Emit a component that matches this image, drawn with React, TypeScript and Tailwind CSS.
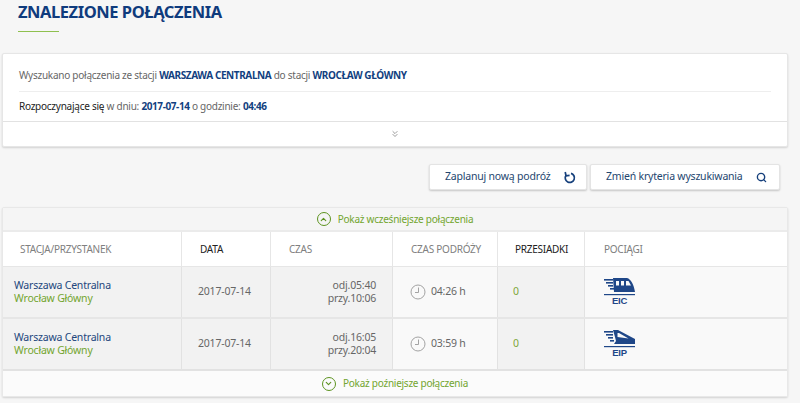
import React from 'react';
import { ChevronsDown, ChevronUp, ChevronDown, Search } from 'lucide-react';

const TrainIcon = ({ label, fast }: { label: string; fast?: boolean }) => (
  <svg width="34" height="30" viewBox="0 0 34 30" className="block">
    <g fill="#1f4788">
      <rect x="1" y="2" width="9" height="1.6" />
      <rect x="3" y="5" width="7" height="1.6" />
      <rect x="5" y="8" width="5" height="1.6" />
      <rect x="7" y="11" width="4" height="1.6" />
      <rect x="1" y="17" width="31" height="1.2" />
      {fast ? (
        <path d="M10 1 L15 1 L32 10 L32 15 L11 15 L13 12 L12 8 Z M14.5 4 L14.5 8 L25.5 9.5 L16 4 Z" fillRule="evenodd" />
      ) : (
        <path d="M10 1 L24 1 C28 2 31 8 32 15 L11 15 Z M13 4 V8.5 H16 V4 Z M18 4 V8.5 H21 V4 Z M23 4 V8.5 H28 L25.5 4 Z" fillRule="evenodd" />
      )}
    </g>
    <text x="16.5" y="27" textAnchor="middle" fontSize="9.5" fontWeight="700" fill="#1f4788" fontFamily="Liberation Sans, sans-serif">{label}</text>
  </svg>
);

const ClockIcon = () => (
  <svg width="16" height="16" viewBox="0 0 16 16" fill="none" stroke="#a3a3a3" strokeWidth="1" className="shrink-0">
    <circle cx="8" cy="8" r="7" />
    <path d="M8.5 3.5 V8.5 H5" />
  </svg>
);

const RefreshIcon = () => (
  <svg width="13" height="13" viewBox="0 0 13 13" fill="none" stroke="#16407c" strokeWidth="1.7" className="ml-[13px] shrink-0">
    <path d="M8 2.4 A4.6 4.6 0 1 1 3 4.3" />
    <path d="M2.2 1 L3 4.8 L6.6 4.4" />
  </svg>
);

const rows = [
  { dep: '05:40', arr: '10:06', dur: '04:26 h', train: 'EIC', fast: false },
  { dep: '16:05', arr: '20:04', dur: '03:59 h', train: 'EIP', fast: true },
];

const cols = 'grid grid-cols-[178px_89px_122px_105px_87px_1fr]';

export default function App() {
  return (
    <div className="w-[800px] h-[403px] overflow-hidden bg-[#f6f6f6] pl-[2px] pr-3 text-[10px] tracking-[-0.25px] text-[#666] font-['Noto_Sans','Open_Sans',sans-serif]">
      <div className="pl-4 pt-[2px] h-[53px]">
        <h1 className="text-[16.5px] tracking-[-0.45px] leading-[20px] font-bold text-[#0f3b7d]">ZNALEZIONE POŁĄCZENIA</h1>
        <div className="w-[41px] h-px bg-[#8fc04f] mt-[9px]" />
      </div>

      <div className="bg-white rounded-[2px] border border-[#e6e6e6] shadow-[0_1px_2px_rgba(0,0,0,0.15)] h-[94px]">
        <div className="mx-4 h-[38px] pt-[13px] leading-[16px] border-b border-[#eeeeee]">
          Wyszukano połączenia ze stacji <b className="text-[#123f7f] tracking-[-0.4px]">WARSZAWA CENTRALNA</b> do stacji <b className="text-[#123f7f] tracking-[-0.4px]">WROCŁAW GŁÓWNY</b>
        </div>
        <div className="mx-4 h-[29px] pt-[6px] leading-[16px]">
          <span className="text-[#222]">Rozpoczynające się</span> w dniu: <b className="text-[#123f7f] tracking-[-0.4px]">2017-07-14</b> o godzinie: <b className="text-[#123f7f] tracking-[-0.4px]">04:46</b>
        </div>
        <div className="h-[25px] border-t border-[#e2e2e2] flex items-center justify-center">
          <ChevronsDown size={10} className="text-[#888]" />
        </div>
      </div>

      <div className="flex justify-end gap-[3px] pr-2 mt-[17px] h-[26px] text-[10.5px] tracking-[-0.2px]">
        <button className="w-[158px] bg-white rounded-[2px] border border-[#e4e4e4] shadow-[0_1px_2px_rgba(0,0,0,0.2)] flex items-center pl-[15px] text-[#24466f]">
          <span>Zaplanuj nową podróż</span>
          <RefreshIcon />
        </button>
        <button className="w-[190px] bg-white rounded-[2px] border border-[#e4e4e4] shadow-[0_1px_2px_rgba(0,0,0,0.2)] flex items-center pl-[15px] text-[#24466f]">
          <span>Zmień kryteria wyszukiwania</span>
          <Search size={11} strokeWidth={3} className="ml-[13px] text-[#16407c]" />
        </button>
      </div>

      <div className="mt-[17px] rounded-[2px] border border-[#e8e8e8] shadow-[0_1px_2px_rgba(0,0,0,0.15)]">
        <div className="h-[24px] bg-[#f5f5f5] flex items-center justify-center gap-[7px] text-[#72a52f] border-b-2 border-[#ebebeb]">
          <span className="w-[14px] h-[14px] rounded-full border-[1.5px] border-[#5d9320] flex items-center justify-center">
            <ChevronUp size={9} strokeWidth={3} className="text-[#5d9320]" />
          </span>
          Pokaż wcześniejsze połączenia
        </div>
        <div className={`${cols} h-[35px] bg-white items-stretch text-[#808080] border-b border-[#e6e6e6]`}>
          <div className="flex items-center pl-[17px]">STACJA/PRZYSTANEK</div>
          <div className="flex items-center pl-[18px] border-l border-[#e6e6e6] text-[#222]">DATA</div>
          <div className="flex items-center pl-[18px] border-l border-[#e6e6e6]">CZAS</div>
          <div className="flex items-center pl-[18px] border-l border-[#e6e6e6]">CZAS PODRÓŻY</div>
          <div className="flex items-center pl-[17px] border-l border-[#e6e6e6] text-[#222]">PRZESIADKI</div>
          <div className="flex items-center pl-[19px] border-l border-[#e6e6e6]">POCIĄGI</div>
        </div>
        {rows.map((r, i) => (
          <div key={r.train} className={`${cols} h-[52px] text-[10.5px] tracking-[-0.2px] leading-[13.5px] ${i === 0 ? 'border-b-2 border-[#e6e6e6]' : 'border-b-2 border-[#e2e2e2]'}`}>
            <div className="bg-[#f2f2f2] flex flex-col justify-center pl-[11px]">
              <span className="text-[#23477d]">Warszawa Centralna</span>
              <span className="text-[#72a52f]">Wrocław Główny</span>
            </div>
            <div className="bg-[#f2f2f2] border-l border-[#e2e2e2] flex items-center pl-[16px] text-[#666]">2017-07-14</div>
            <div className="bg-[#f2f2f2] border-l border-[#e2e2e2] flex flex-col justify-center items-end pr-4 text-[#666]">
              <span>odj.{r.dep}</span>
              <span>przy.{r.arr}</span>
            </div>
            <div className="bg-[#f9f9f9] border-l border-[#e2e2e2] flex items-center pl-[17px] gap-[5px] text-[#666]">
              <ClockIcon />
              {r.dur}
            </div>
            <div className="bg-[#f2f2f2] border-l border-[#e2e2e2] flex items-center pl-[15px] text-[#7fa83a]">0</div>
            <div className="bg-[#f9f9f9] border-l border-[#e2e2e2] flex items-center pl-[18px]">
              <TrainIcon label={r.train} fast={r.fast} />
            </div>
          </div>
        ))}
        <div className="h-[25px] bg-[#fbfbfb] flex items-center justify-center gap-[7px] text-[#72a52f]">
          <span className="w-[14px] h-[14px] rounded-full border-[1.5px] border-[#5d9320] flex items-center justify-center">
            <ChevronDown size={9} strokeWidth={3} className="text-[#5d9320]" />
          </span>
          Pokaż poźniejsze połączenia
        </div>
      </div>
    </div>
  );
}
